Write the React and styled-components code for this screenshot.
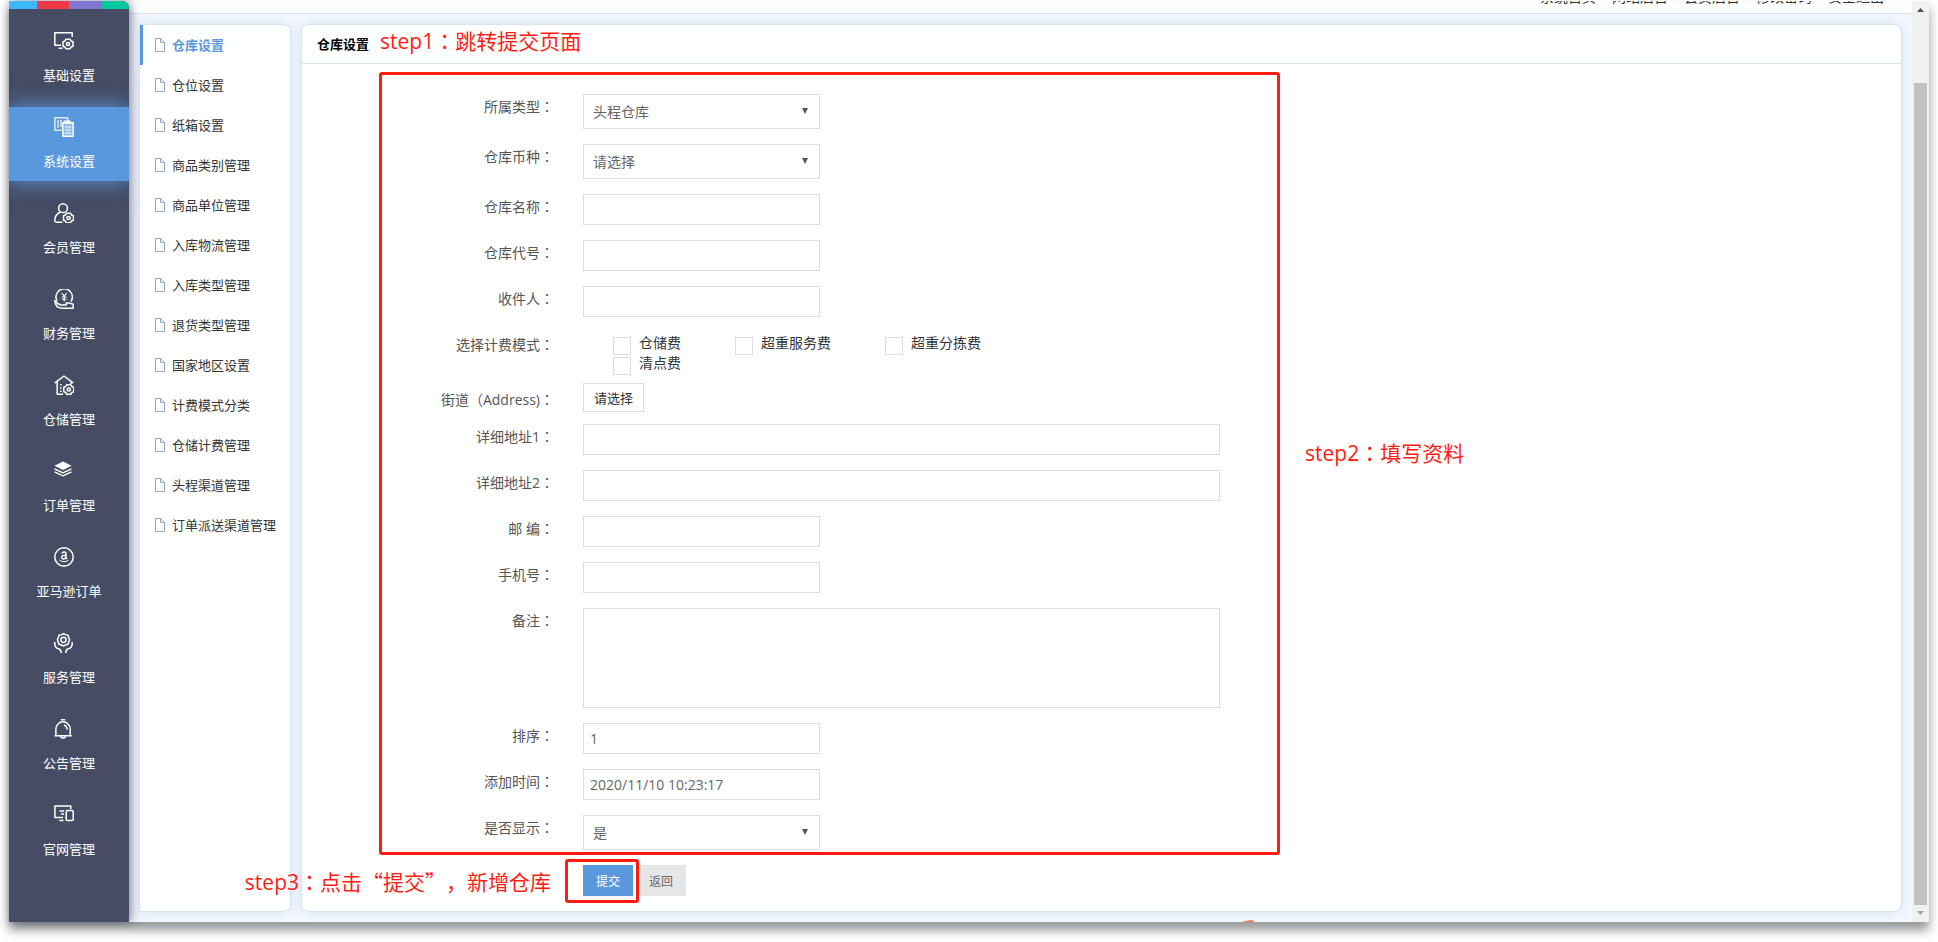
import { useState } from 'react';
import styled, { createGlobalStyle, css } from 'styled-components';

const RED = '#ff1d12';
const BLUE = '#5a98de';

const navItems = [
  { name: '基础设置', icon: 'screen' },
  { name: '系统设置', icon: 'system' },
  { name: '会员管理', icon: 'member' },
  { name: '财务管理', icon: 'finance' },
  { name: '仓储管理', icon: 'storage' },
  { name: '订单管理', icon: 'layers' },
  { name: '亚马逊订单', icon: 'amazon' },
  { name: '服务管理', icon: 'service' },
  { name: '公告管理', icon: 'bell' },
  { name: '官网管理', icon: 'devices' },
];

const menuItems = [
  '仓库设置', '仓位设置', '纸箱设置', '商品类别管理', '商品单位管理', '入库物流管理', '入库类型管理',
  '退货类型管理', '国家地区设置', '计费模式分类', '仓储计费管理', '头程渠道管理', '订单派送渠道管理',
];

const topLinks = ['系统首页', '网站后台', '会员后台', '修改密码', '安全退出'];

const feeModes = ['仓储费', '超重服务费', '超重分拣费', '清点费'];

const Gear = ({ x, y }) => (
  <g transform={`translate(${x} ${y})`}>
    <path d="M-2 -4.8H2L3 -3L5 -2.2V0L5 2.2L3 3L2 4.8H-2L-3 3L-5 2.2V-2.2L-3 -3Z" />
    <circle r="1.6" />
  </g>
);

const icons = {
  screen: (
    <>
      <path d="M18.2 6V1.8H.8V14.2H7M4.5 17.3H8.5" />
      <Gear x={14} y={13} />
    </>
  ),
  system: (
    <>
      <path d="M13.5 3V.8H.8V13.2H7.5M4 3V11M7 3V10M10.5 3V5" opacity=".8" />
      <path d="M8.8 5.8H11.5L12.5 4H15.5L16.5 5.8H19.2V19.2H8.8Z" fill="#8fbaea" />
      <path d="M11.5 5.5H16.5" strokeWidth="3" />
      <path d="M11 10H17M11 13H17M11 16H17" strokeWidth="1" />
    </>
  ),
  member: (
    <>
      <circle cx="9" cy="5.2" r="4.4" />
      <path d="M6.5 9C3 10.5 .8 13.5 .8 17.5Q.8 19.2 2.5 19.2H8.5" />
      <Gear x={14.5} y={15} />
    </>
  ),
  finance: (
    <>
      <path d="M3 12A8.2 8.2 0 1 1 17 12.5" />
      <path d="M7.8 4L10.2 7.2L12.6 4M10.2 7.2V12.5M7.8 8H12.6M7.8 10.2H12.6" strokeWidth="1.1" />
      <path d="M.8 11.5L3.5 14.5L7 16H11.5Q13.5 15.5 12 14H15L19.2 15.2V19.2H8Q1.2 19 .8 11.5Z" />
    </>
  ),
  storage: (
    <>
      <path d="M.6 8.2L10 1L19.4 8.2M3.2 7V19.2H9M17 7V9" />
      <path d="M6.8 9V10.6M6.8 12.2V13.8M6.8 15.4V17" strokeWidth="1.6" />
      <Gear x={14.8} y={14.5} />
    </>
  ),
  layers: (
    <>
      <path d="M9 .5L17.5 4.8L9 9L.5 4.8Z" fill="#fff" stroke="none" />
      <path d="M.5 7.8L9 11.8L17.5 7.8M.5 10.8L9 14.8L17.5 10.8" strokeWidth="1.3" />
    </>
  ),
  amazon: (
    <>
      <circle cx="10" cy="10" r="9.2" />
      <path d="M7.8 6.6Q8.4 5 10.2 5Q12 5 12 7V11L13 12M12 8.2Q7.6 8 7.6 10.3Q7.6 12 9.3 12Q11.4 12 12 10" />
      <path d="M5.5 13Q10 16.5 14.5 13.2" strokeWidth="1" />
    </>
  ),
  service: (
    <>
      <path d="M7.5 1.6L9.5 .8L11.5 1.6L14 2.3L14.7 4.8L15.6 6.8L14.7 9L14 11.2L11.5 12L9.5 13L7.5 12L5 11.2L4.2 9L3.4 6.8L4.2 4.8L5 2.3Z" />
      <circle cx="9.5" cy="6.8" r="2.6" />
      <path d="M.8 9V11Q1 15 5 16Q7.2 16.5 7.2 20M18.2 9V11Q18 15 14 16Q11.8 16.5 11.8 20" />
    </>
  ),
  bell: (
    <>
      <path d="M6.8 .8H11.2M.4 16.8H17.8M1.9 16.5V10A7.1 7.1 0 0 1 16.2 10V16.5" />
      <path d="M10 6Q12.8 6.8 13.2 10.5M6.3 17.2Q9 21 11.8 17.2" />
    </>
  ),
  devices: (
    <>
      <path d="M16.8 4V.9H.9V12.5H9M5.5 15.6H9.5M5.5 6H10M7 9H10" />
      <rect x="12.2" y="5.5" width="7" height="10" rx="1" />
    </>
  ),
};

const DocIcon = () => (
  <svg width="10" height="14" viewBox="0 0 10 14" fill="none" stroke="#93a7bb" aria-hidden="true">
    <path d="M.5 .5H6L9.5 4.5V13.5H.5Z" />
    <path d="M5.5 .5V4.5H9.5" />
  </svg>
);

const Field = ({ label, id, gap, drop, children }) => (
  <Row $gap={gap}>
    <Label as={id ? 'label' : 'span'} htmlFor={id} $drop={drop}>{label}<Wide>：</Wide></Label>
    {children}
  </Row>
);

const SelectField = ({ label, id, options }) => (
  <Field label={label} id={id}>
    <SelectBox>
      <Select id={id}>
        {options.map((ele) => <option key={ele}>{ele}</option>)}
      </Select>
    </SelectBox>
  </Field>
);

const TextField = ({ label, id, wide, value }) => (
  <Field label={label} id={id}>
    <Input id={id} type="text" defaultValue={value} $wide={wide} />
  </Field>
);

function App() {

  const [nav, setNav] = useState('系统设置');
  const [menu, setMenu] = useState('仓库设置');

  return (
    <Page>
      <GlobalStyle />
      <Frame>
        <Sidebar>
          <Stripes><i /><i /><i /><i /></Stripes>
          {navItems.map(({ name, icon }) => (
            <NavItem key={name} href="#" $active={nav === name} onClick={() => setNav(name)}>
              <svg width="20" height="20" viewBox="0 0 20 20" aria-hidden="true">{icons[icon]}</svg>
              <span>{name}</span>
            </NavItem>
          ))}
        </Sidebar>

        <Main>
          <TopBar>
            {topLinks.map((ele) => <a key={ele} href="#">{ele}</a>)}
          </TopBar>
          <Content>
            <SubMenu>
              {menuItems.map((ele) => (
                <MenuItem key={ele} href="#" $active={menu === ele} onClick={() => setMenu(ele)}>
                  <DocIcon />
                  {ele}
                </MenuItem>
              ))}
            </SubMenu>

            <Panel>
              <PanelHeader>
                <PanelTitle>仓库设置</PanelTitle>
                <StepOne>step1<Wide>：</Wide>跳转提交页面</StepOne>
              </PanelHeader>
              <Form onSubmit={(e) => e.preventDefault()}>
                <FormOutline />
                <StepTwo>step2<Wide>：</Wide>填写资料</StepTwo>
                <SelectField label="所属类型" id="type" options={['头程仓库']} />
                <SelectField label="仓库币种" id="currency" options={['请选择']} />
                <TextField label="仓库名称" id="name" />
                <TextField label="仓库代号" id="code" />
                <TextField label="收件人" id="receiver" />
                <Field label="选择计费模式" gap={8}>
                  <CheckGroup>
                    {feeModes.map((ele) => (
                      <CheckLabel key={ele}>
                        <Checkbox type="checkbox" />
                        {ele}
                      </CheckLabel>
                    ))}
                  </CheckGroup>
                </Field>
                <Field label="街道（Address)" id="street" gap={12} drop={4}>
                  <PickButton id="street" type="button">请选择</PickButton>
                </Field>
                <TextField label="详细地址1" id="address1" wide />
                <TextField label="详细地址2" id="address2" wide />
                <TextField label="邮 编" id="zip" />
                <TextField label="手机号" id="phone" />
                <Field label="备注" id="remark">
                  <TextArea id="remark" />
                </Field>
                <TextField label="排序" id="sort" value="1" />
                <TextField label="添加时间" id="created" value="2020/11/10 10:23:17" />
                <SelectField label="是否显示" id="visible" options={['是', '否']} />
                <Actions>
                  <SubmitSpot>
                    <StepThree>step3<Wide>：</Wide>点击<Quoted>“提交”</Quoted>，新增仓库</StepThree>
                    <Button type="submit" $primary>提交</Button>
                  </SubmitSpot>
                  <Button type="button">返回</Button>
                </Actions>
              </Form>
            </Panel>
          </Content>
          <Corner width="12" height="2" viewBox="0 0 12 2" aria-hidden="true">
            <path d="M0 2Q5 0 11 0L12 2Z" fill="#f4794f" />
          </Corner>
        </Main>

        <ScrollBar aria-hidden="true">
          <svg width="17" height="17" viewBox="0 0 17 17"><path d="M5 11L8.5 7L12 11Z" fill="#505050" /></svg>
          <Thumb />
          <svg width="17" height="17" viewBox="0 0 17 17"><path d="M5 6L8.5 10L12 6Z" fill="#a3a3a3" /></svg>
        </ScrollBar>
      </Frame>
    </Page>
  );
}

export default App;

const GlobalStyle = createGlobalStyle`
  * {
    box-sizing: border-box;
  }

  body {
    margin: 0;
    background: #fff;
    color: #333;
    font-family: "Open Sans", "Noto Sans CJK SC", sans-serif;
    font-size: 13px;
    text-spacing-trim: space-all;
  }

  a {
    color: inherit;
    text-decoration: none;
  }

  input, select, textarea, button {
    font-family: inherit;
    margin: 0;
  }
`;

const Page = styled.div`
  padding: 1px 9px 20px;
`;

const Frame = styled.div`
  display: flex;
  background: #f3f7fe;
  box-shadow: 0 8px 10px rgba(0, 0, 0, 0.42);
`;

const Sidebar = styled.nav`
  position: relative;
  z-index: 1;
  flex: none;
  display: flex;
  flex-direction: column;
  gap: 12px;
  width: 120px;
  overflow: hidden;
  border-top-right-radius: 8px;
  background: #454c63;
  box-shadow: 2px 0 10px rgba(50, 56, 85, 0.6);
`;

const Stripes = styled.div`
  display: grid;
  grid-template-columns: 28fr 32fr 32fr 28fr;
  height: 8px;

  i:nth-child(1) { background: #3cb8ff; }
  i:nth-child(2) { background: #f13a47; }
  i:nth-child(3) { background: #7f77d1; }
  i:nth-child(4) { background: #00c9a0; }
`;

const NavItem = styled.a`
  display: flex;
  flex-direction: column;
  gap: 14px;
  height: 74px;
  padding-top: 10px;
  color: #fff;
  line-height: 20px;
  text-align: center;

  ${({ $active }) => $active && css`
    background: ${BLUE};
    box-shadow: 0 0 20px ${BLUE};
  `}

  svg {
    margin-left: 45px;
    fill: none;
    stroke: #fff;
    stroke-width: 1.5;
    stroke-linejoin: round;
  }
`;

const Main = styled.div`
  position: relative;
  flex: 1;
  display: flex;
  flex-direction: column;
  min-width: 0;
`;

const TopBar = styled.header`
  display: flex;
  justify-content: flex-end;
  align-items: flex-end;
  gap: 16px;
  height: 13px;
  padding: 0 28px 6px;
  overflow: hidden;
  background: #fff;
  border-bottom: 1px solid #d9e3ef;
  font-size: 14px;
  line-height: 20px;
`;

const Content = styled.div`
  flex: 1;
  display: flex;
  gap: 10px;
  padding: 10px;
`;

const card = css`
  background: #fff;
  border: 1px solid #d7e4f1;
  box-shadow: 0 0 12px #d3e2f2;
`;

const SubMenu = styled.nav`
  ${card}
  flex: none;
  width: 152px;
  border-radius: 0 8px 8px 0;
`;

const MenuItem = styled.a`
  display: flex;
  align-items: center;
  gap: 7px;
  height: 40px;
  padding: 0 0 2px 12px;
  border-left: 3px solid ${({ $active }) => ($active ? BLUE : 'transparent')};
  color: ${({ $active }) => ($active ? BLUE : '#333')};
  font-weight: ${({ $active }) => ($active ? 700 : 400)};
  white-space: nowrap;

  svg {
    margin-top: 2px;
  }
`;

const Panel = styled.main`
  ${card}
  flex: 1;
  border-radius: 8px;
`;

const PanelHeader = styled.div`
  position: relative;
  display: flex;
  align-items: center;
  height: 39px;
  padding: 0 0 2px 15px;
  border-bottom: 1px solid #d7e4f1;
`;

const PanelTitle = styled.h1`
  margin: 0;
  color: #000;
  font-size: 13px;
`;

// punctuation centred in its full-width cell
const Wide = styled.span`
  font-family: "Noto Sans CJK TC", sans-serif;
`;

const Quoted = styled.span`
  font-family: "Noto Sans CJK SC", sans-serif;
`;

const Step = styled.span`
  position: absolute;
  color: ${RED};
  font-size: 21px;
  line-height: 28px;
  white-space: nowrap;
`;

const StepOne = styled(Step)`
  top: 1px;
  left: 78px;
`;

const StepTwo = styled(Step)`
  top: 374px;
  left: 1003px;
`;

const StepThree = styled(Step)`
  top: 2px;
  right: 82px;
`;

const Form = styled.form`
  position: relative;
  padding: 30px 0 15px;
`;

const FormOutline = styled.div`
  position: absolute;
  top: 8px;
  bottom: 56px;
  left: 77px;
  width: 901px;
  border: 3px solid ${RED};
  border-radius: 3px;
  pointer-events: none;
`;

const Row = styled.div`
  display: flex;
  align-items: flex-start;
  gap: 29px;
  margin-bottom: ${({ $gap = 15 }) => $gap}px;
`;

const Label = styled.label`
  flex: none;
  width: 252px;
  padding-top: ${({ $drop = 0 }) => $drop + 2}px;
  color: #555;
  font-size: 14px;
  line-height: 20px;
  text-align: right;
`;

const control = css`
  display: block;
  border: 1px solid #ddd;
  border-radius: 0;
  background: #fff;
  color: #666;
  font-size: 14px;
  outline: none;
`;

const Input = styled.input`
  ${control}
  width: ${({ $wide }) => ($wide ? 637 : 237)}px;
  height: 31px;
  padding: 0 6px;
`;

const TextArea = styled.textarea`
  ${control}
  width: 637px;
  height: 100px;
  padding: 6px;
  resize: none;
`;

const SelectBox = styled.div`
  position: relative;
  width: 237px;

  &::after {
    content: '';
    position: absolute;
    top: 14px;
    right: 12px;
    border: 3px solid transparent;
    border-top: 6px solid #555;
    border-bottom: 0;
    pointer-events: none;
  }
`;

const Select = styled.select`
  ${control}
  appearance: none;
  width: 100%;
  height: 35px;
  padding: 0 9px;
`;

const CheckGroup = styled.div`
  display: flex;
  flex-wrap: wrap;
  gap: 2px 54px;
  width: 500px;
  padding: 5px 0 0 30px;
`;

const CheckLabel = styled.label`
  display: flex;
  gap: 8px;
  font-size: 14px;
  line-height: 12px;
`;

const Checkbox = styled.input`
  appearance: none;
  width: 18px;
  height: 18px;
  border: 1px solid #ddd;
  background: #fff;

  &:checked {
    background: ${BLUE};
  }
`;

const PickButton = styled.button`
  height: 29px;
  padding: 0 10px;
  border: 1px solid #ddd;
  background: #fff;
  color: #333;
  font-size: 13px;
`;

const Actions = styled.div`
  display: flex;
  gap: 3px;
  padding-left: 281px;
`;

const SubmitSpot = styled.div`
  position: relative;

  &::after {
    content: '';
    position: absolute;
    inset: -6px -6px -7px -18px;
    border: 3px solid ${RED};
    border-radius: 3px;
    pointer-events: none;
  }
`;

const Button = styled.button`
  width: 50px;
  height: 31px;
  padding: 0;
  border: 0;
  background: ${({ $primary }) => ($primary ? BLUE : '#e6e6e6')};
  color: ${({ $primary }) => ($primary ? '#fff' : '#666')};
  font-size: 12px;
`;

const Corner = styled.svg`
  position: absolute;
  bottom: 0;
  left: 1113px;
`;

const ScrollBar = styled.div`
  flex: none;
  display: flex;
  flex-direction: column;
  width: 17px;
  background: #f1f1f1;
`;

const Thumb = styled.div`
  flex: 1;
  margin: 65px 2px 0;
  background: #c1c1c1;
`;
